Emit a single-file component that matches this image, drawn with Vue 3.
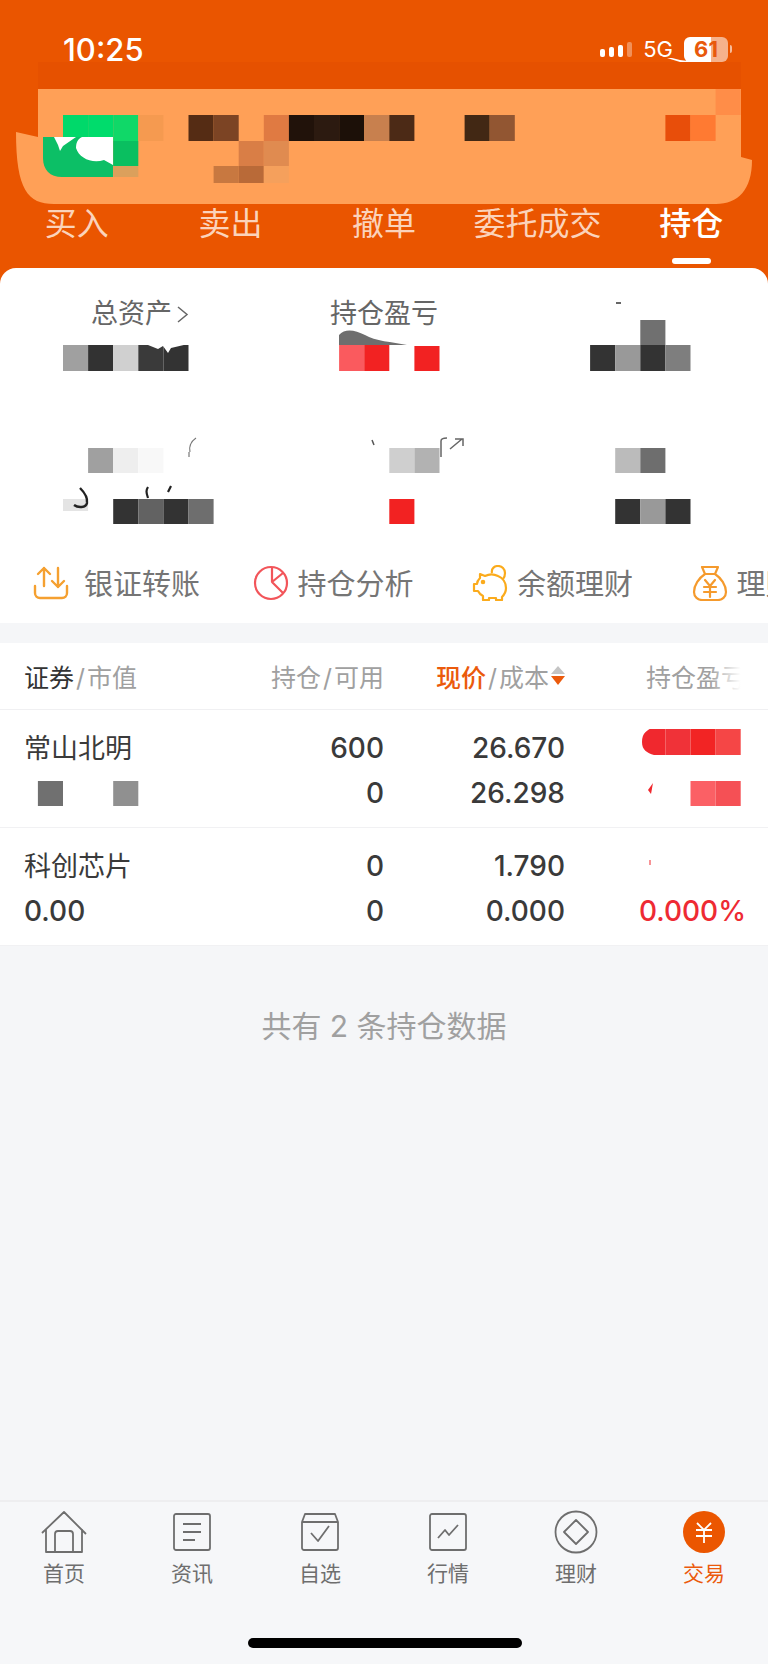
<template>
  <div class="page">
    <header class="top">
      <div class="status">
        <span class="time">10:25</span>
        <div class="status-right">
          <div class="signal">
            <i class="b1"></i><i class="b2"></i><i class="b3"></i><i class="b4"></i>
          </div>
          <span class="net">5G</span>
          <div class="battery">61</div>
          <i class="nub"></i>
        </div>
      </div>
      <nav class="tabs">
        <div v-for="t in tabs" :key="t" class="tab" :class="{ active: t === '持仓' }">{{ t }}</div>
      </nav>
    </header>

    <section class="card">
      <div class="summary">
        <div class="cell first"><span class="label">总资产</span>
          <svg class="chev" width="13" height="17" viewBox="0 0 13 17"><path d="M2 1l9 7.5-9 7.5" fill="none" stroke="#666" stroke-width="1.5"/></svg>
        </div>
        <div class="cell"><span class="label">持仓盈亏</span></div>
        <div class="cell"></div>
        <div class="cell"></div>
        <div class="cell"></div>
        <div class="cell"></div>
      </div>
      <div class="actions">
        <div class="action wide">
          <svg width="36" height="34" viewBox="0 0 36 34" fill="none" stroke="#f5a030" stroke-width="2.4" stroke-linecap="round" stroke-linejoin="round">
            <path d="M11 20V2M5 8l6-6 6 6M25 2v19M19 15l6 6 6-6"/>
            <path d="M2 20v7a5 5 0 0 0 5 5h22a5 5 0 0 0 5-5v-7"/>
          </svg>
          <span>银证转账</span>
        </div>
        <div class="action">
          <svg width="36" height="36" viewBox="0 0 36 36" fill="none" stroke="#f2555a" stroke-width="2.2" stroke-linejoin="round">
            <circle cx="18" cy="18" r="16"/>
            <path d="M19 2v15l11-9M19 17l11 11"/>
          </svg>
          <span>持仓分析</span>
        </div>
        <div class="action">
          <svg width="36" height="36" viewBox="0 0 36 36" fill="none" stroke="#fbab1c" stroke-width="2.2" stroke-linejoin="round">
            <path d="M8 9l5 2c4-2 9-2 13 0 5 2 8 7 8 12 0 4-2 7-4 9v3h-6v-2h-7v2h-6v-4c-2-1-4-3-5-5H2v-7h3c0-3 2-5 3-6z"/>
            <path d="M20 8c-1-5 3-7 6-7 4 0 7 3 7 7 0 3-1 5-2 6"/>
            <circle cx="11" cy="17" r="1.2" fill="#fbab1c"/>
          </svg>
          <span>余额理财</span>
        </div>
        <div class="action">
          <svg width="36" height="36" viewBox="0 0 36 36" fill="none" stroke="#f59a2c" stroke-width="2.2" stroke-linejoin="round" stroke-linecap="round">
            <path d="M10 2h16l-3 7h-10zM13 9h10c6 4 11 11 11 18 0 5-4 8-8 8H10c-4 0-8-3-8-8 0-7 5-14 11-18z"/>
            <path d="M13 15l5 6 5-6M12 22h12M12 27h12M18 21v11"/>
          </svg>
          <span>理财产品</span>
        </div>
      </div>
    </section>

    <section class="table">
      <div class="thead grid">
        <div><b class="dark">证券</b><i class="sl">/</i>市值</div>
        <div class="num">持仓<i class="sl">/</i>可用</div>
        <div class="num price"><b class="hot">现价</b><i class="sl">/</i>成本
          <span class="sort"><i class="up"></i><i class="down"></i></span>
        </div>
        <div class="num fade">持仓盈亏</div>
      </div>
      <div v-for="r in rows" :key="r.name" class="row grid">
        <div class="name">{{ r.name }}</div>
        <div class="num">{{ r.hold }}</div>
        <div class="num">{{ r.price }}</div>
        <div class="num red"></div>
        <div>{{ r.value }}</div>
        <div class="num">{{ r.usable }}</div>
        <div class="num">{{ r.cost }}</div>
        <div class="num red">{{ r.pct }}</div>
      </div>
    </section>

    <div class="empty">共有 2 条持仓数据</div>

    <footer class="nav">
      <div class="nav-items">
        <div class="nav-item">
          <div class="nav-icon">
            <svg width="46" height="42" viewBox="0 0 46 42" fill="none" stroke="#6e6e6e" stroke-width="1.8" stroke-linejoin="round">
              <path d="M1 22L23 1l22 22M5 18v23h36V18M14 41V23q0-3 3-3h12q3 0 3 3v18"/>
            </svg>
          </div>
          <span>首页</span>
        </div>
        <div class="nav-item">
          <div class="nav-icon">
            <svg width="38" height="38" viewBox="0 0 38 38" fill="none" stroke="#6e6e6e" stroke-width="1.8">
              <rect x="1" y="1" width="36" height="36" rx="2"/>
              <path d="M10 11h18M10 19h18M10 27h12"/>
            </svg>
          </div>
          <span>资讯</span>
        </div>
        <div class="nav-item">
          <div class="nav-icon">
            <svg width="38" height="38" viewBox="0 0 38 38" fill="none" stroke="#6e6e6e" stroke-width="1.8" stroke-linejoin="round">
              <path d="M1 9l3-8h30l3 8v26a2 2 0 0 1-2 2H3a2 2 0 0 1-2-2zM1 9h36"/>
              <path d="M10 20l7 8 11-15"/>
            </svg>
          </div>
          <span>自选</span>
        </div>
        <div class="nav-item">
          <div class="nav-icon">
            <svg width="38" height="38" viewBox="0 0 38 38" fill="none" stroke="#6e6e6e" stroke-width="1.8" stroke-linejoin="round">
              <rect x="1" y="1" width="36" height="36" rx="2"/>
              <path d="M9 25l7-8 4 5 9-10"/>
            </svg>
          </div>
          <span>行情</span>
        </div>
        <div class="nav-item">
          <div class="nav-icon">
            <svg width="44" height="44" viewBox="0 0 44 44" fill="none" stroke="#6e6e6e" stroke-width="1.8" stroke-linejoin="round">
              <circle cx="22" cy="22" r="20.5"/>
              <path d="M22 10l12 12-12 12-12-12z"/>
            </svg>
          </div>
          <span>理财</span>
        </div>
        <div class="nav-item on">
          <div class="nav-icon">
            <svg width="42" height="42" viewBox="0 0 42 42" fill="none" stroke="#fff" stroke-width="1.8">
              <circle cx="21" cy="21" r="21" fill="#eb5600" stroke="none"/>
              <path d="M14 12l7 7 7-7M13 19h16M13 25h16M21 19v13"/>
            </svg>
          </div>
          <span>交易</span>
        </div>
      </div>
      <div class="home-bar"></div>
    </footer>

    <!-- 打码层 -->
    <svg class="mask" width="768" height="1664" viewBox="0 0 768 1664">
      <rect x="38" y="62" width="703" height="27" fill="#e65100"/>
      <path d="M38 89H741V157L752 160C752 190 738 204 716 204H54C28 204 16 190 16 132L38 137Z" fill="#ffa057"/>
      <rect v-for="(c, i) in cells" :key="i" :x="c.x" :y="c.y" :width="c.w" :height="c.h" :fill="c.fill"/>
      <path d="M43 137H113V177H62C50 177 43 170 43 158Z" fill="#0cbf66"/>
      <path d="M54 137H76L63 146 60 151 58 145Z" fill="#fff"/>
      <path d="M82 137H113V165L104 160C92 164 79 158 76 148 76 142 78 139 82 137Z" fill="#fff"/>
      <path d="M339 345V335C345 328 355 330 365 335 375 341 392 342 407 345Z" fill="#6e6e6e"/>
      <path d="M148 345L158 349 163 346 168 353 171 348 188 344V342H148Z" fill="#fff"/>
      <path d="M189 457V452M196 438C190 442 189 448 190 452" fill="none" stroke="#777" stroke-width="1.2"/>
      <path d="M441 457V441C441 439 443 438 447 438M450 449L462 439M455 439H463V446" fill="none" stroke="#666" stroke-width="1.5"/>
      <path d="M372 440L374 445" stroke="#555" stroke-width="1.5"/>
      <path d="M616 303H621" stroke="#666" stroke-width="2"/>
      <path d="M80 488C84 492 88 497 87 503 86 508 78 508 74 505" fill="none" stroke="#222" stroke-width="2.4"/>
      <path d="M148 498C146 492 146 490 148 487M168 492L171 486" fill="none" stroke="#222" stroke-width="2.2"/>
      <path d="M640 727H654C647 730 642 733 642 742 642 750 647 753 654 755H640Z" fill="#fff"/>
      <path d="M651 794L653 783 648 790" fill="#f0282e"/>
      <path d="M650 860V865" stroke="#f0282e" stroke-width="1"/>
      <path d="M667 58L680 62H696L680 60 672 58Z" fill="#fff"/>
    </svg>
  </div>
</template>

<script setup>
const tabs = ['买入', '卖出', '撤单', '委托成交', '持仓']

const rows = [
  { name: '常山北明', hold: '600', price: '26.670', value: '', usable: '0', cost: '26.298', pct: '' },
  { name: '科创芯片', hold: '0', price: '1.790', value: '0.00', usable: '0', cost: '0.000', pct: '0.000%' }
]

// 打码色块：[列, y, 高, 颜色]，每列宽约 25px
const blocks = [
  [26, 89, 26, '#ff8d48'],
  [0, 115, 26, '#00d96a'], [1, 115, 26, '#00dc6c'], [2, 115, 26, '#10d868'], [3, 115, 26, '#f59a50'],
  [5, 115, 26, '#552c14'], [6, 115, 26, '#7c4424'], [8, 115, 26, '#e07a42'], [9, 115, 26, '#21120a'],
  [10, 115, 26, '#2c1a10'], [11, 115, 26, '#1c1008'], [12, 115, 26, '#c8804e'], [13, 115, 26, '#4c2a16'],
  [16, 115, 26, '#422814'], [17, 115, 26, '#925632'], [24, 115, 26, '#e84e0a'], [25, 115, 26, '#ff7a32'],
  [0, 141, 25, '#00cb66'], [1, 141, 25, '#00c964'], [2, 141, 25, '#0abf60'],
  [7, 141, 25, '#d97e46'], [8, 141, 25, '#e08b50'],
  [2, 166, 11, '#dba05c'], [6, 166, 17, '#c87840'], [7, 166, 17, '#b96a38'], [8, 166, 17, '#f5a05c'],
  [0, 345, 26, '#a0a0a0'], [1, 345, 26, '#323232'], [2, 345, 26, '#d0d0d0'], [3, 345, 26, '#3a3a3a'], [4, 345, 26, '#333333'],
  [11, 345, 26, '#fa5a5e'], [12, 345, 26, '#f22222'], [14, 346, 25, '#f22222'],
  [23, 320, 25, '#707070'],
  [21, 345, 26, '#333333'], [22, 345, 26, '#999999'], [23, 345, 26, '#333333'], [24, 345, 26, '#7e7e7e'],
  [1, 448, 25, '#a0a0a0'], [2, 448, 25, '#eeeeee'], [3, 448, 25, '#f8f8f8'],
  [13, 448, 25, '#cfcfcf'], [14, 448, 25, '#b2b2b2'], [22, 448, 25, '#bbbbbb'], [23, 448, 25, '#6e6e6e'],
  [0, 499, 12, '#e4e4e4'], [2, 499, 25, '#333333'], [3, 499, 25, '#626262'], [4, 499, 25, '#333333'], [5, 499, 25, '#6e6e6e'],
  [13, 499, 25, '#f22222'], [22, 499, 25, '#333333'], [23, 499, 25, '#999999'], [24, 499, 25, '#333333'],
  [23, 729, 26, '#f0282e'], [24, 729, 26, '#f03238'], [25, 729, 26, '#f22424'], [26, 729, 26, '#f54646'],
  [-1, 781, 25, '#707070'], [2, 781, 25, '#909090'], [25, 781, 25, '#fb6065'], [26, 781, 25, '#f55055']
]

const cells = blocks.map(([col, y, h, fill]) => ({ x: 63 + col * 25.1, y, w: 25.1, h, fill }))
</script>

<style scoped>
.page {
  position: relative;
  width: 768px;
  height: 1664px;
  overflow: hidden;
  display: flex;
  flex-direction: column;
  background: #f5f6f8;
  font-family: Inter, "Noto Sans CJK SC", sans-serif;
  color: #333;
}

.top {
  height: 284px;
  flex: none;
  background: #ea5500;
  color: #fff;
}

.status {
  height: 98px;
  padding: 0 36px 0 63px;
  display: flex;
  align-items: center;
  justify-content: space-between;
}

.time {
  font-size: 31px;
  font-weight: 500;
}

.status-right {
  display: flex;
  align-items: center;
}

.signal {
  display: flex;
  align-items: flex-end;
  gap: 4px;
  height: 15px;
  margin-right: 11px;
}

.signal i {
  width: 5px;
  border-radius: 2px;
  background: #fff;
}

.b1 { height: 8px; }
.b2 { height: 10px; }
.b3 { height: 12px; }
.b4 { height: 15px; opacity: 0.35; }

.net {
  font-size: 22px;
  margin-right: 11px;
}

.battery {
  width: 44px;
  height: 25px;
  border-radius: 6px;
  background: linear-gradient(90deg, #fff 0 62%, rgba(255, 255, 255, 0.55) 62%);
  color: #e8590c;
  font-size: 22px;
  font-weight: 700;
  line-height: 25px;
  text-align: center;
}

.nub {
  width: 2px;
  height: 8px;
  margin-left: 2px;
  border-radius: 0 2px 2px 0;
  background: rgba(255, 255, 255, 0.6);
}

.tabs {
  display: flex;
  margin-top: 98px;
}

.tab {
  position: relative;
  flex: 1;
  height: 72px;
  line-height: 56px;
  text-align: center;
  font-size: 32px;
  color: #fbd3bb;
}

.tab.active {
  color: #fff;
  font-weight: 500;
}

.tab.active::after {
  content: "";
  position: absolute;
  left: 50%;
  top: 62px;
  width: 39px;
  height: 6px;
  margin-left: -19px;
  border-radius: 3px;
  background: #fff;
}

.card {
  flex: none;
  height: 355px;
  margin-top: -16px;
  background: #fff;
  border-radius: 16px 16px 0 0;
  position: relative;
}

.summary {
  height: 277px;
  display: grid;
  grid-template-columns: repeat(3, 1fr);
  grid-template-rows: 138px 139px;
}

.cell {
  padding-top: 27px;
  text-align: center;
  color: #666;
  font-size: 27px;
  line-height: 38px;
}

.cell.first {
  padding-left: 24px;
}

.chev {
  margin-left: 4px;
}

.actions {
  height: 76px;
  padding-left: 33px;
  display: flex;
  overflow: hidden;
}

.action {
  flex: none;
  width: 219.5px;
  display: flex;
  align-items: center;
  gap: 9px;
  font-size: 29px;
  color: #757575;
  white-space: nowrap;
}

.action span {
  padding-bottom: 2px;
}

.action svg {
  flex: none;
}

.action.wide {
  gap: 15px;
}

.table {
  flex: none;
  margin-top: 20px;
  background: #fff;
  font-size: 28px;
}

.grid {
  display: grid;
  grid-template-columns: 226px 134px 181px 181px;
  padding-left: 24px;
}

.num {
  text-align: right;
}

.thead {
  height: 66px;
  align-items: center;
  font-size: 25px;
  color: #a0a0a0;
  border-bottom: 1px solid #f0f0f2;
}

.thead b {
  font-weight: 400;
}

.sl {
  font-style: normal;
  margin: 0 2px;
}

.dark {
  color: #333;
}

.hot {
  color: #eb5a0c;
  font-weight: 500 !important;
}

.price {
  padding-right: 16px;
  position: relative;
}

.sort {
  position: absolute;
  right: 0;
  top: 50%;
  margin-top: -10px;
  display: flex;
  flex-direction: column;
  gap: 2px;
}

.sort i {
  width: 0;
  height: 0;
  border-left: 7px solid transparent;
  border-right: 7px solid transparent;
}

.up {
  border-bottom: 8px solid #c4c4c4;
}

.down {
  border-top: 9px solid #eb5a0c;
}

.fade {
  position: relative;
}

.fade::after {
  content: "";
  position: absolute;
  right: 0;
  top: 0;
  bottom: 0;
  width: 36px;
  background: linear-gradient(90deg, rgba(255, 255, 255, 0), #fff 85%);
}

.row {
  height: 118px;
  box-sizing: border-box;
  padding-top: 16px;
  grid-auto-rows: 45px;
  line-height: 45px;
  font-weight: 500;
  color: #3a3a3a;
  border-bottom: 1px solid #f1f1f3;
}

.name {
  font-weight: 400;
  font-size: 27px;
}

.red {
  color: #ee2a33;
}

.empty {
  margin-top: 61px;
  line-height: 38px;
  text-align: center;
  font-size: 30px;
  color: #a0a0a0;
}

.nav {
  margin-top: auto;
  height: 164px;
  flex: none;
  position: relative;
  background: #f6f7f9;
  border-top: 2px solid #eeeef0;
  box-sizing: border-box;
}

.nav-items {
  display: flex;
  padding-top: 8px;
}

.nav-item {
  flex: 1;
  display: flex;
  flex-direction: column;
  align-items: center;
  font-size: 21px;
  line-height: 28px;
  color: #6e6e6e;
}

.nav-item.on {
  color: #eb5a0c;
}

.nav-icon {
  height: 44px;
  margin-bottom: 6px;
  display: flex;
  align-items: center;
}

.home-bar {
  position: absolute;
  left: 248px;
  bottom: 16px;
  width: 274px;
  height: 10px;
  border-radius: 5px;
  background: #000;
}

.mask {
  position: absolute;
  left: 0;
  top: 0;
  pointer-events: none;
}
</style>
